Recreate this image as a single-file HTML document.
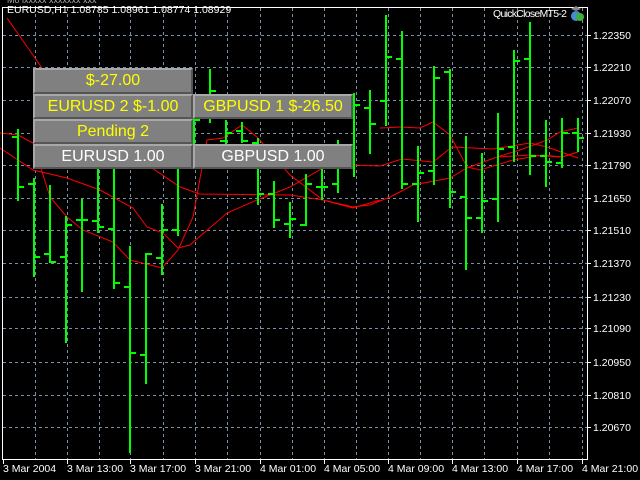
<!DOCTYPE html>
<html><head><meta charset="utf-8"><style>
html,body{margin:0;padding:0;background:#000;width:640px;height:480px;overflow:hidden;font-family:"Liberation Sans",sans-serif}
#c{position:absolute;left:0;top:0}
.b{position:absolute;box-sizing:border-box;background:#808080;border-top:2px solid #a8a8a8;border-left:2px solid #a8a8a8;border-bottom:2px solid #555;border-right:2px solid #555;font-size:16px;text-align:center;line-height:21px;color:#ffff00}
.w{color:#fff}
</style></head><body>
<svg id="c" width="640" height="480" xmlns="http://www.w3.org/2000/svg" font-family="Liberation Sans, sans-serif">
<rect width="640" height="480" fill="#000"/>
<g id="grid" stroke="#7890a8" stroke-width="1" stroke-dasharray="3,3" fill="none"></g>
<line x1="2" y1="7.5" x2="587" y2="7.5" stroke="#00c000" stroke-dasharray="6,4"/>
<g id="red" stroke="#ff0000" stroke-width="1" fill="none"></g>
<g id="bars" fill="#00ff00"></g>
<rect x="2.5" y="7.5" width="585" height="452" fill="none" stroke="#fff"/>
<g id="ax" fill="#fff" font-size="10.5"></g>
<text x="7" y="13" fill="#fff" font-size="10.5">EURUSD,H1  1.08785 1.08961 1.08774 1.08929</text>
<text x="7" y="3" fill="#aaa" font-size="9">Mo ixxxxx xxxxxxx xxx</text>
<text x="493" y="17" fill="#fff" font-size="10.5" textLength="74">QuickCloseMT5-2</text>
<circle cx="576" cy="16" r="5" fill="#4a8ad0"/><circle cx="580" cy="17" r="4" fill="#3cb03c"/><path d="M571 9 L576 6 L581 9 L576 11Z" fill="#888"/>
</svg>
<div class="b" style="left:33px;top:68px;width:160px;height:26px">$-27.00</div>
<div class="b" style="left:33px;top:94px;width:160px;height:25px">EURUSD 2 $-1.00</div>
<div class="b" style="left:193px;top:94px;width:160px;height:25px">GBPUSD 1 $-26.50</div>
<div class="b" style="left:33px;top:119px;width:160px;height:25px">Pending 2</div>
<div class="b w" style="left:33px;top:144px;width:160px;height:25px">EURUSD 1.00</div>
<div class="b w" style="left:193px;top:144px;width:160px;height:25px">GBPUSD 1.00</div>
<script>
var NS="http://www.w3.org/2000/svg";
function el(p,t,a,txt){var e=document.createElementNS(NS,t);for(var k in a)e.setAttribute(k,a[k]);if(txt)e.textContent=txt;document.getElementById(p).appendChild(e);}
var ys=[35,67,100,133,165,198,230,263,297,328,362,395,427];
var pr=["1.22350","1.22210","1.22070","1.21930","1.21790","1.21650","1.21510","1.21370","1.21230","1.21090","1.20950","1.20810","1.20670"];
ys.forEach(function(y,i){el("grid","line",{x1:3,y1:y+.5,x2:587,y2:y+.5});el("ax","text",{x:593,y:y+4},pr[i]);el("ax","rect",{x:587,y:y,width:4,height:1});});
var xs=[34.5,67,98.5,130,163,195,227,260,292,324,356,388,420,452,484,517,549,582];
xs.forEach(function(x){el("grid","line",{x1:Math.round(x)+.5,y1:8,x2:Math.round(x)+.5,y2:459});});
var tl=[[3,"3 Mar 2004"],[67,"3 Mar 13:00"],[130,"3 Mar 17:00"],[195,"3 Mar 21:00"],[260,"4 Mar 01:00"],[324,"4 Mar 05:00"],[388,"4 Mar 09:00"],[452,"4 Mar 13:00"],[517,"4 Mar 17:00"],[582,"4 Mar 21:00"]];
tl.forEach(function(t,i){el("ax","text",{x:t[0],y:472},t[1]);el("ax","rect",{x:t[0],y:460,width:1,height:4});});
var B=[[129,201,136,186],[178,277,183,256],[185,263,253,261],[216,343,256,224],[199,292,219,219],[150,233,220,226],[140,289,228,282],[246,453,286,352],[253,384,354,253],[204,275,257,229],[120,236,229,130],[118,145,140,119],[69,123,100,90],[120,150,140,132],[122,143,130,140],[138,205,142,193],[181,228,193,219],[202,238,223,218],[174,226,224,183],[168,200,186,186],[140,193,183,155],[93,177,167,104],[90,154,107,123],[15,126,100,56],[31,189,58,183],[146,222,183,172],[66,185,170,77],[69,208,71,191],[136,270,196,217],[153,233,217,200],[113,222,198,148],[50,162,146,60],[22,175,58,155],[120,187,155,161],[118,168,162,132],[118,152,132,137]];
B.forEach(function(b,i){var x=17+16*i;el("bars","rect",{x:x,y:b[0],width:2,height:b[1]-b[0]});el("bars","rect",{x:x-5,y:b[2],width:5,height:2});el("bars","rect",{x:x+2,y:b[3],width:5,height:2});});
var L=[
"0,133 18,135 33,143 50,197 67,217 83,230 113,242 130,260 162,268 178,250 193,217 207,140 223,138 242,125 257,137 290,175 323,200 353,207 370,205 390,197 413,185 450,178 467,168 497,157 530,155 562,157 578,152",
"7,18 42,68 75,125 100,150 152,168 180,187 200,194 290,195 323,200 353,208 380,200",
"0,148 33,170 67,178 100,190 133,208 147,227 163,233 178,248 190,245 227,213 257,200 290,187 323,168 353,165 380,166 402,159 433,162 452,147 493,149 530,143 547,147 578,158",
"380,128 400,127 420,128 433,122 450,135 467,167 480,170 513,160 543,155 562,157 578,152",
"497,157 520,150 547,140 560,132 578,128"];
L.forEach(function(p){el("red","polyline",{points:p});});
</script>
</body></html>
